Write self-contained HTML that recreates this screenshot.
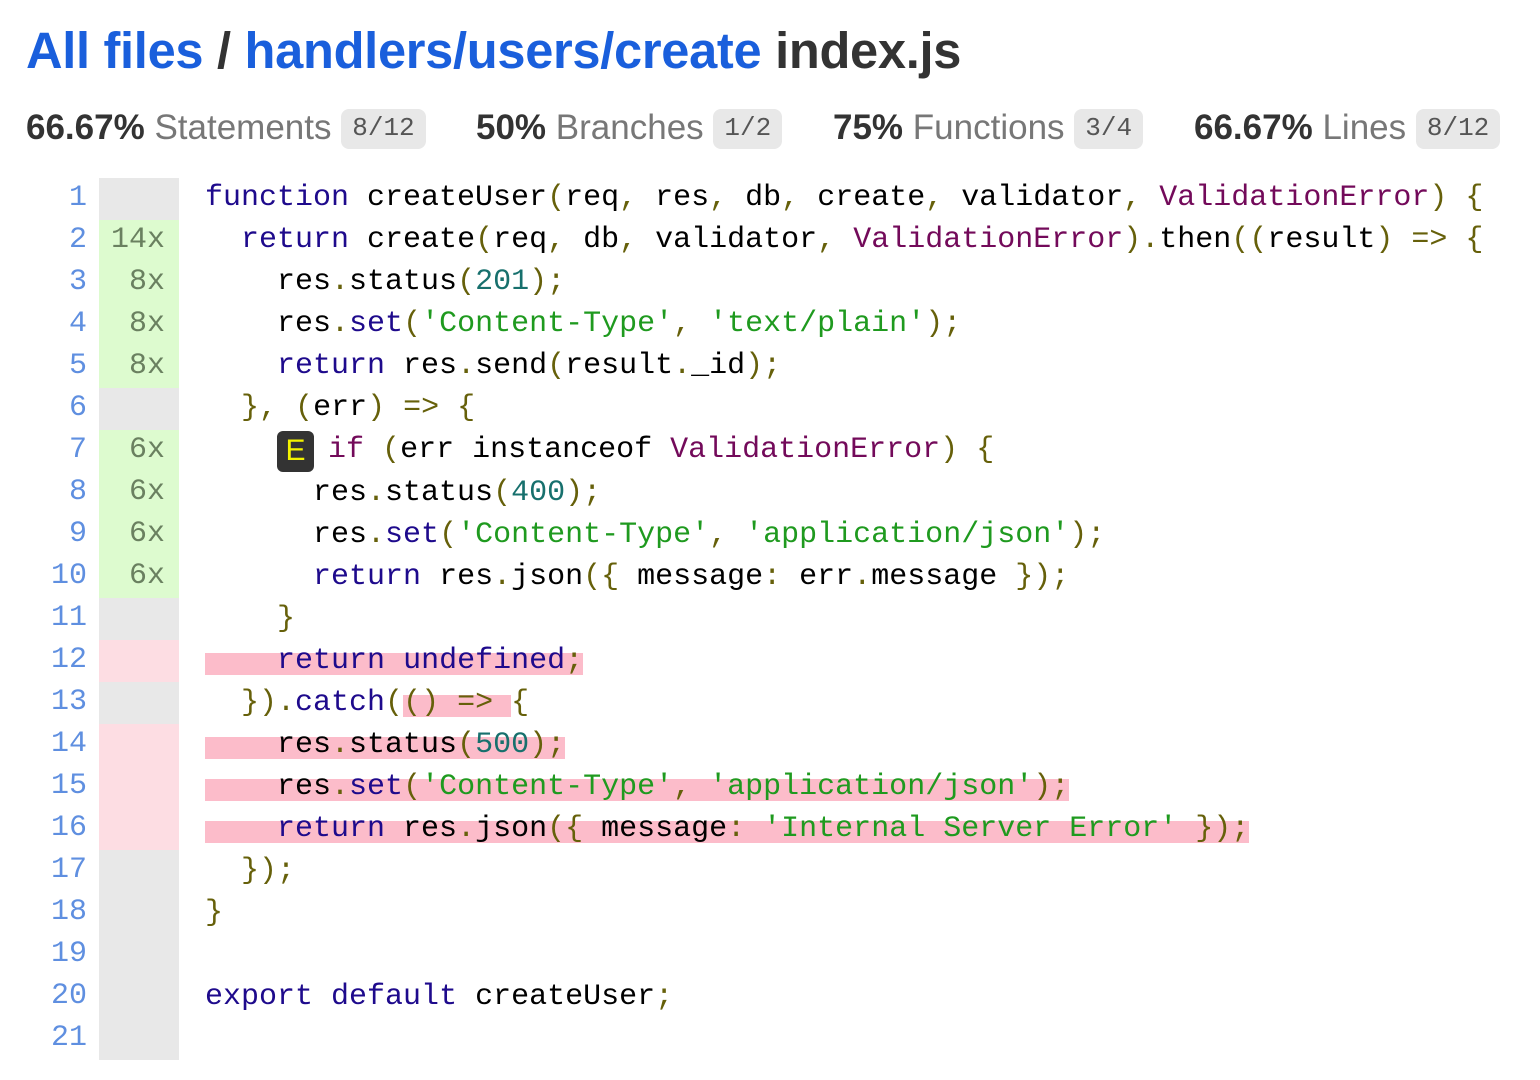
<!DOCTYPE html>
<html><head><meta charset="utf-8"><style>
body{margin:0;background:#fff;font-family:"Liberation Sans",sans-serif;width:1540px;height:1080px;overflow:hidden;position:relative}
h1{position:absolute;left:26px;top:21px;margin:0;font-size:50.6px;font-weight:bold;color:#333;white-space:nowrap;letter-spacing:-0.3px}
h1 a{color:#1a5fdc;text-decoration:none}
.st{position:absolute;top:106px;height:44px;line-height:44px;white-space:nowrap;font-size:35px}
.st b{color:#333}
.st .l{color:#777}
.st .f{display:inline-block;font-family:"Liberation Mono",monospace;font-size:26px;color:#555;background:#e8e8e8;border-radius:8px;padding:0 11px;height:40px;line-height:38px;vertical-align:4px;margin-left:0px}
.tbl{position:absolute;left:0;top:177px;font-family:"Liberation Mono",monospace;font-size:30px;line-height:42px}
.ln{position:absolute;left:0;width:87px;text-align:right;color:#5f8fe0}
.cv{position:absolute;left:99px;top:1px;width:80px;background:#e8e8e8;text-align:right;color:#6a8060}
.cv div{height:42px;padding-right:14px;line-height:40px}
.y{background:#ddfbcf}.n{background:#fddde3}
.code{position:absolute;left:205px;white-space:pre;color:#000}
.k{color:#1e0a8c}.p{color:#66600a}.s{color:#1f9a1f}.t{color:#730a5a}.d{color:#17706d}
.h{background:linear-gradient(transparent 9px,#fcbcca 9px,#fcbcca 31px,transparent 31px)}
.E{display:inline-block;width:37px;height:41px;background:#333;color:#f2f200;border-radius:6px;text-align:center;line-height:40px;vertical-align:-3px;font-family:"Liberation Sans",sans-serif;font-size:30px;margin-right:14px}
</style></head><body>
<h1><a>All files</a> / <a>handlers/users/create</a> index.js</h1>
<div class="st" style="left:26px"><b>66.67%</b> <span class="l">Statements</span> <span class="f">8/12</span></div>
<div class="st" style="left:476px"><b>50%</b> <span class="l">Branches</span> <span class="f">1/2</span></div>
<div class="st" style="left:833px"><b>75%</b> <span class="l">Functions</span> <span class="f">3/4</span></div>
<div class="st" style="left:1194px"><b>66.67%</b> <span class="l">Lines</span> <span class="f">8/12</span></div>
<div class="tbl">
<div class="ln">1<br>2<br>3<br>4<br>5<br>6<br>7<br>8<br>9<br>10<br>11<br>12<br>13<br>14<br>15<br>16<br>17<br>18<br>19<br>20<br>21</div>
<div class="cv"><div></div><div class="y">14x</div><div class="y">8x</div><div class="y">8x</div><div class="y">8x</div><div></div><div class="y">6x</div><div class="y">6x</div><div class="y">6x</div><div class="y">6x</div><div></div><div class="n"></div><div></div><div class="n"></div><div class="n"></div><div class="n"></div><div></div><div></div><div></div><div></div><div></div></div>
<div class="code"><span class="k">function</span> createUser<span class="p">(</span>req<span class="p">,</span> res<span class="p">,</span> db<span class="p">,</span> create<span class="p">,</span> validator<span class="p">,</span> <span class="t">ValidationError</span><span class="p">)</span> <span class="p">{</span>
  <span class="k">return</span> create<span class="p">(</span>req<span class="p">,</span> db<span class="p">,</span> validator<span class="p">,</span> <span class="t">ValidationError</span><span class="p">).</span>then<span class="p">((</span>result<span class="p">)</span> <span class="p">=&gt;</span> <span class="p">{</span>
    res<span class="p">.</span>status<span class="p">(</span><span class="d">201</span><span class="p">);</span>
    res<span class="p">.</span><span class="k">set</span><span class="p">(</span><span class="s">'Content-Type'</span><span class="p">,</span> <span class="s">'text/plain'</span><span class="p">);</span>
    <span class="k">return</span> res<span class="p">.</span>send<span class="p">(</span>result<span class="p">.</span>_id<span class="p">);</span>
  <span class="p">},</span> <span class="p">(</span>err<span class="p">)</span> <span class="p">=&gt;</span> <span class="p">{</span>
    <span class="E">E</span><span class="t">if</span> <span class="p">(</span>err instanceof <span class="t">ValidationError</span><span class="p">)</span> <span class="p">{</span>
      res<span class="p">.</span>status<span class="p">(</span><span class="d">400</span><span class="p">);</span>
      res<span class="p">.</span><span class="k">set</span><span class="p">(</span><span class="s">'Content-Type'</span><span class="p">,</span> <span class="s">'application/json'</span><span class="p">);</span>
      <span class="k">return</span> res<span class="p">.</span>json<span class="p">({</span> message<span class="p">:</span> err<span class="p">.</span>message <span class="p">});</span>
    <span class="p">}</span>
<span class="h">    <span class="k">return</span> <span class="k">undefined</span><span class="p">;</span></span>
  <span class="p">}).</span><span class="k">catch</span><span class="p">(</span><span class="h"><span class="p">()</span> <span class="p">=&gt;</span> </span><span class="p">{</span>
<span class="h">    res<span class="p">.</span>status<span class="p">(</span><span class="d">500</span><span class="p">);</span></span>
<span class="h">    res<span class="p">.</span><span class="k">set</span><span class="p">(</span><span class="s">'Content-Type'</span><span class="p">,</span> <span class="s">'application/json'</span><span class="p">);</span></span>
<span class="h">    <span class="k">return</span> res<span class="p">.</span>json<span class="p">({</span> message<span class="p">:</span> <span class="s">'Internal Server Error'</span> <span class="p">});</span></span>
  <span class="p">});</span>
<span class="p">}</span>

<span class="k">export</span> <span class="k">default</span> createUser<span class="p">;</span>
</div>
</div>
</body></html>
